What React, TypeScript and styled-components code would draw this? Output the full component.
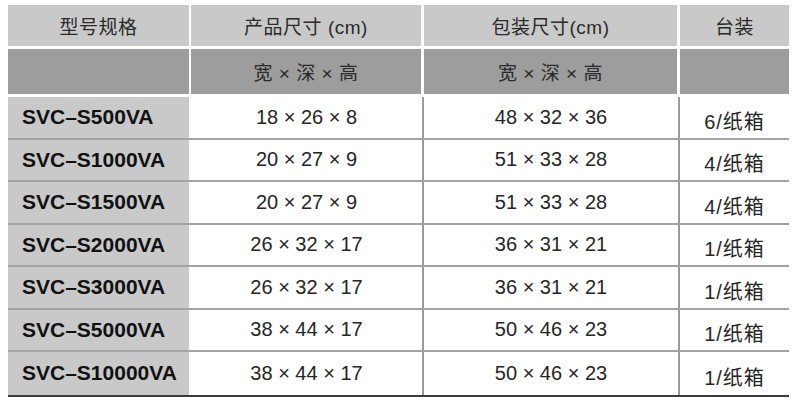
import { FC } from "react";
import styled, { createGlobalStyle } from "styled-components";

const GlobalStyle = createGlobalStyle`
  html, body {
    margin: 0;
    padding: 0;
    background: #ffffff;
  }
  body {
    font-family: "Liberation Sans", "Noto Sans CJK SC", sans-serif;
    color: #222;
  }
`;

const Page = styled.div`
  padding: 5px 11px 0 8px;
  width: 781px;
`;

const Grid = styled.div`
  display: grid;
  grid-template-columns: 183px 233px 256px 109px;
`;

const HeadRow = styled(Grid)<{ $dark?: boolean; $height: number }>`
  height: ${(p) => p.$height}px;
  border-bottom: 3px solid #fff;
  & > div {
    background: ${(p) => (p.$dark ? "#9d9d9d" : "#c9c9c9")};
  }
`;

const HeadCell = styled.div<{ $gap?: number }>`
  display: flex;
  align-items: center;
  justify-content: center;
  border-right: ${(p) => p.$gap ?? 0}px solid #fff;
  background-clip: padding-box;
  font-family: "Liberation Sans", "Noto Sans CJK SC", sans-serif;
  font-size: 19px;
  color: #2a2a2a;
  letter-spacing: 0.5px;
`;

const Body = styled.div`
  border-bottom: 2px solid #3c3c3c;
`;

const BodyRow = styled(Grid)<{ $last?: boolean }>`
  height: 42.5px;
  box-sizing: border-box;
  border-bottom: ${(p) => (p.$last ? "none" : "2px solid #a3a3a3")};
`;

const ModelCell = styled.div`
  display: flex;
  align-items: center;
  padding-left: 14px;
  background: #c9c9c9;
  border-right: 2px solid #fff;
  background-clip: padding-box;
  font-weight: bold;
  font-size: 21px;
  color: #111;
`;

const ValueCell = styled.div<{ $line?: boolean }>`
  display: flex;
  align-items: center;
  justify-content: center;
  border-right: ${(p) => (p.$line ? "2px solid #9a9a9a" : "none")};
  font-size: 20px;
  color: #262626;
`;

const PackCell = styled(ValueCell)`
  font-size: 20px;
  letter-spacing: 1px;
  padding-top: 6px;
`;

type Row = { model: string; product: string; pack: string; qty: string };

const rows: Row[] = [
  { model: "SVC–S500VA", product: "18 × 26 × 8", pack: "48 × 32 × 36", qty: "6/纸箱" },
  { model: "SVC–S1000VA", product: "20 × 27 × 9", pack: "51 × 33 × 28", qty: "4/纸箱" },
  { model: "SVC–S1500VA", product: "20 × 27 × 9", pack: "51 × 33 × 28", qty: "4/纸箱" },
  { model: "SVC–S2000VA", product: "26 × 32 × 17", pack: "36 × 31 × 21", qty: "1/纸箱" },
  { model: "SVC–S3000VA", product: "26 × 32 × 17", pack: "36 × 31 × 21", qty: "1/纸箱" },
  { model: "SVC–S5000VA", product: "38 × 44 × 17", pack: "50 × 46 × 23", qty: "1/纸箱" },
  { model: "SVC–S10000VA", product: "38 × 44 × 17", pack: "50 × 46 × 23", qty: "1/纸箱" },
];

const App: FC = () => {
  return (
    <>
      <GlobalStyle />
      <Page>
        <HeadRow $height={41}>
          <HeadCell $gap={2}>型号规格</HeadCell>
          <HeadCell $gap={3}>产品尺寸 (cm)</HeadCell>
          <HeadCell $gap={3}>包装尺寸(cm)</HeadCell>
          <HeadCell>台装</HeadCell>
        </HeadRow>
        <HeadRow $dark $height={45}>
          <HeadCell $gap={2} />
          <HeadCell $gap={3}>宽 × 深 × 高</HeadCell>
          <HeadCell $gap={3}>宽 × 深 × 高</HeadCell>
          <HeadCell />
        </HeadRow>
        <Body>
          {rows.map((r, i) => (
            <BodyRow key={r.model} $last={i === rows.length - 1}>
              <ModelCell>{r.model}</ModelCell>
              <ValueCell $line>{r.product}</ValueCell>
              <ValueCell $line>{r.pack}</ValueCell>
              <PackCell>{r.qty}</PackCell>
            </BodyRow>
          ))}
        </Body>
      </Page>
    </>
  );
};

export default App;
